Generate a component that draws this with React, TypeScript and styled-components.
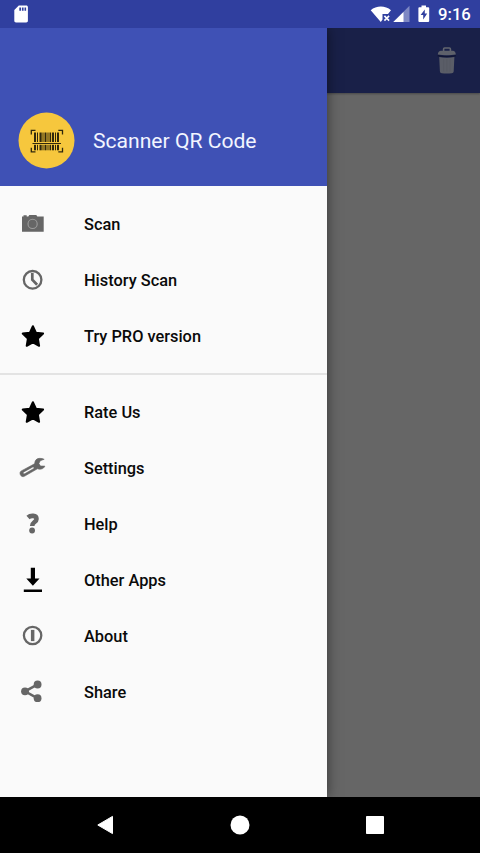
import React from "react";
import styled, { createGlobalStyle } from "styled-components";

const GlobalStyle = createGlobalStyle`
  *, *::before, *::after { box-sizing: border-box; }
  html, body { margin: 0; padding: 0; background: #000; }
  body { font-family: Roboto, "Liberation Sans", sans-serif; overflow: hidden; }
  svg { display: block; flex: none; }
`;

const Screen = styled.div`
  width: 480px;
  height: 853px;
  display: flex;
  flex-direction: column;
  overflow: hidden;
`;

const StatusBar = styled.header`
  height: 28px;
  flex: none;
  display: flex;
  align-items: center;
  justify-content: space-between;
  padding: 0 9px 0 14px;
  background: #303f9f;
  color: #fff;
`;

const StatusIcons = styled.div`
  display: flex;
  align-items: center;
`;

const Clock = styled.time`
  width: 33px;
  margin-left: 7px;
  font-size: 16.7px;
  line-height: 28px;
  font-weight: 500;
  padding-top: 1px;
  white-space: nowrap;
`;

const Main = styled.main`
  flex: 1;
  min-height: 0;
  display: flex;
  overflow: hidden;
  background: #666;
`;

const Drawer = styled.nav`
  width: 326.5px;
  flex: none;
  display: flex;
  flex-direction: column;
  background: #fafafa;
  box-shadow: 0 0 12px rgba(0, 0, 0, 0.5);
  z-index: 1;
`;

const DrawerHeader = styled.div`
  height: 158px;
  flex: none;
  display: flex;
  align-items: center;
  gap: 18px;
  padding: 66px 0 0 18px;
  background: #3f51b5;
`;

const AppTitle = styled.h1`
  margin: 0;
  padding-top: 2px;
  font-size: 21.1px;
  line-height: 28px;
  font-weight: 400;
  color: #f2f5ff;
  white-space: nowrap;
`;

const MenuGroup = styled.ul<{ $divided?: boolean }>`
  list-style: none;
  margin: 0;
  padding: ${(p) => (p.$divided ? "9px 0" : "10px 0 9px")};
  border-top: ${(p) => (p.$divided ? "2px solid #e3e3e3" : "none")};
`;

const MenuItem = styled.li`
  height: 56px;
  display: flex;
  align-items: center;
  gap: 36px;
  padding-left: 16px;
  color: #0a0a0a;
  font-size: 16.37px;
  font-weight: 500;
  white-space: nowrap;
`;

const Backdrop = styled.section`
  flex: 1;
`;

const Toolbar = styled.div`
  height: 65px;
  display: flex;
  align-items: center;
  justify-content: flex-end;
  padding: 0 22px 2px 0;
  background: #192048;
  box-shadow: 0 1px 2px rgba(0, 0, 0, 0.3);
`;

const NavBar = styled.footer`
  height: 56px;
  flex: none;
  display: flex;
  align-items: center;
  justify-content: center;
  gap: 111px;
  background: #000;
`;

const GREY = "#666";

const Icon = ({ children }: { children: React.ReactNode }) => (
  <svg width="32" height="32" viewBox="0 0 32 32">{children}</svg>
);

const CameraIcon = () => (
  <Icon>
    <path d="M6 8.600h1.500V7.300h3.200v1.300h1.600l1-1.700h7l1 1.700h6.400v15.100H6z" fill={GREY} />
    <circle cx="16.600" cy="15.900" r="4.600" fill="none" stroke="#9c9c9c" strokeWidth="1.100" />
  </Icon>
);

const HistoryIcon = () => (
  <Icon>
    <circle cx="16.600" cy="15.800" r="8.800" fill="none" stroke={GREY} strokeWidth="2.300" />
    <path d="M16.300 9v6.800l4.800 4.900" fill="none" stroke={GREY} strokeWidth="2.700" />
  </Icon>
);

const StarIcon = () => (
  <Icon>
    <path
      d="M16.900 6.200l3 6.500 7.200.9-5.200 5 1.200 7.200-6.200-3.400-6.200 3.400 1.200-7.200-5.200-5 7.200-.9z"
      fill="#000"
      stroke="#000"
      strokeWidth="2"
      strokeLinejoin="round"
    />
  </Icon>
);

const WrenchIcon = () => (
  <Icon>
    <path
      fillRule="evenodd"
      fill={GREY}
      stroke={GREY}
      strokeWidth=".6"
      strokeLinejoin="round"
      d="M28.200 7.300C25.500 5.900 21.700 6 20 7.800c-1.300 1.300-1 3-1.500 4L5.300 18.900c-1.500.8-1.600 2.500-.9 3.900.8 1.700 2.400 2.300 4 1.500l13-7.500c2.400.9 6.200.5 7.500-2.700l-4.400-.1-1.600-2.500 1.400-2.800zM7.800 19.900l8.600-4.700c1.300-.7 2.300.7 1.100 1.500l-8.400 4.900c-1.500.8-2.700-.9-1.300-1.700z"
    />
  </Icon>
);

const HelpIcon = () => (
  <Icon>
    <path
      d="M12 9.500C14.500 7.200 20.500 7 20.500 10.900c0 3.200-4.300 3-4.300 7"
      fill="none"
      stroke={GREY}
      strokeWidth="4.600"
    />
    <circle cx="16.100" cy="22.500" r="2.900" fill={GREY} />
  </Icon>
);

const DownloadIcon = () => (
  <Icon>
    <path d="M14.800 3.700h4.200v10.700h4.500l-6.600 7.300-6.600-7.300h4.500zM7.800 25.600h18.200v2.300H7.800z" fill="#000" />
  </Icon>
);

const AboutIcon = () => (
  <Icon>
    <circle cx="16.600" cy="15.500" r="8.700" fill="none" stroke={GREY} strokeWidth="2.300" />
    <path d="M14.900 9.900h3.500v11.200h-3.500z" fill={GREY} />
  </Icon>
);

const ShareIcon = () => (
  <Icon>
    <path d="M21.700 8.400L9 15.300l12.700 7" fill="none" stroke={GREY} strokeWidth="2.500" />
    <circle cx="21.600" cy="8.500" r="3.900" fill={GREY} />
    <circle cx="9" cy="15.300" r="3.900" fill={GREY} />
    <circle cx="21.600" cy="22.200" r="3.900" fill={GREY} />
  </Icon>
);

const BARS: [number, number][] = [
  [16, 2], [19, 1], [21.500, 2.200], [24.500, 1], [26.500, 2], [29.500, 1],
  [31.500, 1.600], [34, 2], [37, 1], [39, 2],
];

const AppLogo = () => (
  <svg width="57" height="57" viewBox="0 0 57 57">
    <circle cx="28.500" cy="28.500" r="28" fill="#f6c73d" />
    <g fill="#30280d">
      {BARS.map(([x, w]) => (
        <React.Fragment key={x}>
          <rect x={x} y="20.500" width={w} height="9.500" />
          <rect x={x} y="32.800" width={w} height="5.500" />
        </React.Fragment>
      ))}
      <rect x="14.500" y="31" width="28.500" height="1" />
    </g>
    <path
      d="M13.300 22.500v-4.100h4.200M40.300 18.400h4.200v4.100M13.300 35.700v4.200h4.200M40.300 39.900h4.200v-4.200"
      fill="none"
      stroke="#30280d"
      strokeWidth="1.300"
    />
  </svg>
);

const SdCardIcon = () => (
  <svg width="14" height="18" viewBox="0 0 14 18">
    <path
      fillRule="evenodd"
      fill="#fff"
      d="M4.800.500h7.400c1 0 1.700.700 1.700 1.700v13.600c0 1-.7 1.700-1.700 1.700H2c-1 0-1.700-.7-1.700-1.700V5zM5.300 2.600v3.200H7V2.600zM7.900 2.600v3.200h1.700V2.600zM10.500 2.600v3.200h1.600V2.600z"
    />
  </svg>
);

const SignalIcons = () => (
  <svg width="61" height="28" viewBox="0 0 61 28">
    <path d="M.7 10.300C6.300 5.300 15.300 5.300 21 10.300L18 14.100h-5.500v5.300L10.800 22z" fill="#fff" />
    <path d="M14.400 15.900l4.700 4.700M19.100 15.900l-4.700 4.700" stroke="#fff" strokeWidth="1.600" />
    <path d="M39.500 5.700V22H23.300z" fill="#fff" fillOpacity=".38" />
    <path d="M33.500 11.900V22H23.300z" fill="#fff" />
    <path
      fillRule="evenodd"
      fill="#fff"
      d="M51.500 5.500h4.500v1.700h2.300c.5 0 .9.400.9.900v13c0 .5-.4.900-.9.900h-9c-.5 0-.9-.4-.9-.9v-13c0-.5.400-.9.900-.9h2.200zM54.800 9.600l-4.200 5.500h2.600v4.400l4-6h-2.400z"
    />
  </svg>
);

const TrashIcon = () => (
  <svg width="22" height="32" viewBox="0 0 22 32">
    <path
      d="M7.600 7V5c0-.6.400-1 1-1h4.800c.6 0 1 .4 1 1v2"
      fill="none" stroke="#63666f" strokeWidth="1.600"
    />
    <path d="M5 6.700h11.800c1.600 0 3 1.300 3 3.900-5 1-13 1-18 0 0-2.600 1.600-3.900 3.200-3.900z" fill="#5e616b" />
    <path d="M1.700 11.600c5 1.100 13.200 1.100 18.200 0" fill="none" stroke="#101533" strokeWidth="1.400" />
    <path d="M3.200 13.100c4.500.8 10.700.8 15.200 0l-.7 14.200c-.1 1.200-.8 1.900-1.900 1.900-3.200.5-6.800.5-10 0-1.100 0-1.800-.7-1.900-1.900z" fill="#5a5d67" />
    <path d="M7.600 15v12.500M10.800 15v12.500M14 15v12.500" stroke="#555862" strokeWidth=".8" />
  </svg>
);

const primaryItems = [
  { label: "Scan", Glyph: CameraIcon },
  { label: "History Scan", Glyph: HistoryIcon },
  { label: "Try PRO version", Glyph: StarIcon },
];

const secondaryItems = [
  { label: "Rate Us", Glyph: StarIcon },
  { label: "Settings", Glyph: WrenchIcon },
  { label: "Help", Glyph: HelpIcon },
  { label: "Other Apps", Glyph: DownloadIcon },
  { label: "About", Glyph: AboutIcon },
  { label: "Share", Glyph: ShareIcon },
];

export default function App() {
  return (
    <Screen>
      <GlobalStyle />
      <StatusBar>
        <SdCardIcon />
        <StatusIcons>
          <SignalIcons />
          <Clock>9:16</Clock>
        </StatusIcons>
      </StatusBar>
      <Main>
        <Drawer>
          <DrawerHeader>
            <AppLogo />
            <AppTitle>Scanner QR Code</AppTitle>
          </DrawerHeader>
          <MenuGroup>
            {primaryItems.map(({ label, Glyph }) => (
              <MenuItem key={label}><Glyph />{label}</MenuItem>
            ))}
          </MenuGroup>
          <MenuGroup $divided>
            {secondaryItems.map(({ label, Glyph }) => (
              <MenuItem key={label}><Glyph />{label}</MenuItem>
            ))}
          </MenuGroup>
        </Drawer>
        <Backdrop>
          <Toolbar><TrashIcon /></Toolbar>
        </Backdrop>
      </Main>
      <NavBar>
        <svg width="24" height="24" viewBox="0 0 24 24">
          <path d="M19.500 3.400v17.200L4.800 12z" fill="#fff" stroke="#fff" strokeWidth="1" strokeLinejoin="round" />
        </svg>
        <svg width="24" height="24" viewBox="0 0 24 24"><circle cx="12" cy="12" r="9.500" fill="#fff" /></svg>
        <svg width="24" height="24" viewBox="0 0 24 24"><rect x="3" y="3" width="18" height="18" rx=".8" fill="#fff" /></svg>
      </NavBar>
    </Screen>
  );
}
